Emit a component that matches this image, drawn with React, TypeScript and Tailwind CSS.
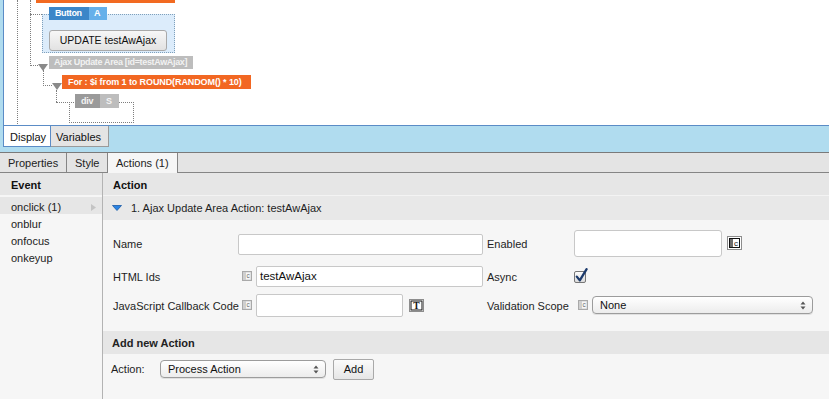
import React from "react";

const events = ["onclick (1)", "onblur", "onfocus", "onkeyup"];

function SmallC() {
  return (
    <svg width="10" height="10" viewBox="0 0 10 10" className="shrink-0">
      <rect x="0.5" y="0.5" width="9" height="9" fill="#cfcfcf" stroke="#a9a9a9" />
      <rect x="4" y="1.5" width="4.5" height="7" fill="#f7f7f7" />
      <text x="6.2" y="7.4" fontSize="6.5" textAnchor="middle" fill="#6a6a6a" fontFamily="Liberation Sans">
        c
      </text>
    </svg>
  );
}

function BigC() {
  return (
    <svg width="15" height="14" viewBox="0 0 15 14" className="shrink-0">
      <rect x="0.5" y="0.5" width="14" height="13" fill="#fff" stroke="#8d8d8d" />
      <rect x="2.5" y="2.5" width="10" height="9" fill="#fff" stroke="#111" />
      <rect x="3" y="3" width="3" height="8" fill="#6d6d6d" />
      <text x="9" y="10" fontSize="8" textAnchor="middle" fill="#111" fontFamily="Liberation Sans">
        c
      </text>
    </svg>
  );
}

function TIcon() {
  return (
    <svg width="15" height="13" viewBox="0 0 15 13" className="shrink-0">
      <rect x="0.5" y="0.5" width="14" height="12" fill="#fff" stroke="#8d8d8d" />
      <rect x="2" y="2" width="11" height="9" fill="#fff" stroke="#111" />
      <text x="7.5" y="10" fontSize="9.5" fontWeight="bold" textAnchor="middle" fill="#111" fontFamily="Liberation Serif">
        T
      </text>
    </svg>
  );
}

function Checkbox() {
  return (
    <svg width="15" height="16" viewBox="0 0 15 16" className="shrink-0">
      <defs>
        <linearGradient id="cb" x1="0" y1="0" x2="0" y2="1">
          <stop offset="0" stopColor="#ffffff" />
          <stop offset="1" stopColor="#d9d9d9" />
        </linearGradient>
      </defs>
      <rect x="0.5" y="3.5" width="11" height="11" rx="1.5" fill="url(#cb)" stroke="#777" />
      <path d="M2.8 8.6 L5.8 12.4 L12.6 1.2" fill="none" stroke="#1c3a6c" strokeWidth="2.3" strokeLinecap="round" strokeLinejoin="round" />
    </svg>
  );
}

function Stepper() {
  return (
    <svg width="6" height="9" viewBox="0 0 6 9" className="shrink-0">
      <path d="M0.5 3.5 L3 0.5 L5.5 3.5 Z" fill="#555" />
      <path d="M0.5 5.5 L3 8.5 L5.5 5.5 Z" fill="#555" />
    </svg>
  );
}

function Select({ value, width }: { value: string; width: string }) {
  return (
    <div
      className={`${width} h-[18px] flex items-center justify-between pl-[7px] pr-[6px] rounded-[4px] border border-[#9c9c9c] bg-gradient-to-b from-white to-[#ececec] shadow-[0_1px_0_#e0e0e0] text-[11px] text-[#111]`}
    >
      <span>{value}</span>
      <Stepper />
    </div>
  );
}

function Designer() {
  const dot = "absolute border-dotted border-[#7e7e7e]";
  return (
    <div className="relative h-[126px] ml-[3px] bg-white border-l border-b border-[#5b8cc6] overflow-hidden">
      {/* connector lines */}
      <div className={`${dot} left-[13px] top-0 h-[124px] border-l`} />
      <div className={`${dot} left-[26px] top-0 h-[66px] border-l`} />
      <div className={`${dot} left-[26px] top-[14px] w-[12px] border-t`} />
      <div className={`${dot} left-[26px] top-[65px] w-[8px] border-t`} />
      <div className={`${dot} left-[39px] top-[70px] h-[16px] border-l`} />
      <div className={`${dot} left-[39px] top-[85px] w-[9px] border-t`} />
      <div className={`${dot} left-[52px] top-[90px] h-[12px] border-l`} />
      <div className={`${dot} left-[52px] top-[102px] w-[14px] border-t`} />

      <svg className="absolute left-[34px] top-[64px]" width="10" height="7" viewBox="0 0 10 7">
        <path d="M0 0 H10 L5 7 Z" fill="#8a8a8a" />
      </svg>
      <svg className="absolute left-[48px] top-[83px]" width="10" height="7" viewBox="0 0 10 7">
        <path d="M0 0 H10 L5 7 Z" fill="#8a8a8a" />
      </svg>

      {/* orange element above */}
      <div className="absolute left-[32px] top-0 w-[139px] h-[3px] bg-[#f26a21]" />

      {/* Button container */}
      <div className="absolute left-[38px] top-[14px] w-[133px] h-[39px] border border-dotted border-[#7fa0bb] bg-[#dcecfb] pl-[6px] pt-[12px]">
        <button className="w-[118px] h-[21px] rounded-[3px] border border-[#a9a9a9] bg-gradient-to-b from-[#f7f7f7] to-[#e2e2e2] text-[10.5px] text-[#111] leading-none">
          UPDATE testAwAjax
        </button>
      </div>
      <div className="absolute left-[45px] top-[7px] flex h-[13px] text-[9px] font-bold tracking-[-0.4px] text-white leading-[13px]">
        <span className="w-[40px] bg-[#3b86c8] pl-[6px]">Button</span>
        <span className="w-[18px] bg-[#66b0ea] pl-[5px]">A</span>
      </div>

      {/* Ajax update area */}
      <div className="absolute left-[45px] top-[56px] w-[144px] h-[13px] bg-[#bdbdbd] text-[#f2f2f2] text-[9px] font-bold tracking-[-0.35px] leading-[13px] pl-[5px] whitespace-nowrap">
        Ajax Update Area [id=testAwAjax]
      </div>

      {/* For loop */}
      <div className="absolute left-[58px] top-[75px] w-[189px] h-[14px] bg-[#f26722] text-white text-[9px] font-bold tracking-[-0.1px] leading-[14px] pl-[6px] whitespace-nowrap">
        For : $i from 1 to ROUND(RANDOM() * 10)
      </div>

      {/* div */}
      <div className={`${dot} left-[65px] top-[102px] w-[65px] h-[21px] border`} />
      <div className="absolute left-[71px] top-[94px] flex h-[14px] text-[9px] font-bold tracking-[-0.3px] text-[#f4f4f4] leading-[14px]">
        <span className="w-[25px] bg-[#9a9a9a] pl-[6px]">div</span>
        <span className="w-[19px] bg-[#bdbdbd] pl-[6px]">S</span>
      </div>
    </div>
  );
}

export default function App() {
  return (
    <div className="w-[829px] h-[399px] overflow-hidden flex flex-col bg-[#f6f6f6] text-[#1e1e1e] font-['Liberation_Sans',Arial,sans-serif]">
      {/* top designer with display tabs */}
      <div className="h-[153px] shrink-0 bg-[#b0dcef] border-b border-[#7a7a7a] flex flex-col">
        <Designer />
        <div className="flex ml-[3px] -mt-px text-[11px] leading-none">
          <div className="w-[48px] h-[22px] bg-white border-l border-r border-b border-[#5b8cc6] pl-[6px] pt-[7px] text-[#111]">
            Display
          </div>
          <div className="w-[58px] h-[22px] bg-[#e4e4e4] border-t border-r border-b border-t-[#5b8cc6] border-r-[#9a9a9a] border-b-[#9a9a9a] pl-[5px] pt-[6px] text-[#111]">
            Variables
          </div>
        </div>
      </div>

      {/* property tabs */}
      <div className="h-[20px] shrink-0 flex bg-[#e4e4e4] text-[11px] text-[#222] leading-none">
        <div className="w-[67px] border-r border-b border-[#858585] pl-[8px] pt-[5px]">Properties</div>
        <div className="w-[41px] border-r border-b border-[#858585] pl-[8px] pt-[5px]">Style</div>
        <div className="w-[70px] border-r border-[#858585] bg-[#f6f6f6] pl-[8px] pt-[5px]">Actions (1)</div>
        <div className="flex-1 border-b border-[#858585]" />
      </div>

      <div className="flex flex-1 min-h-0">
        {/* events */}
        <div className="w-[103px] shrink-0 border-r border-[#b3b3b3]">
          <div className="h-[23px] bg-[#e6e6e6] border-b border-[#f6f6f6] pl-[11px] pt-[7px] text-[11px] font-bold leading-none text-[#111]">
            Event
          </div>
          <div className="mt-px text-[11px] text-[#222]">
            {events.map((e, i) => (
              <div
                key={e}
                className={`h-[17px] pl-[11px] pt-[3px] leading-[14px] flex justify-between pr-[6px] ${
                  i === 0 ? "bg-[#e6e6e6]" : ""
                }`}
              >
                <span>{e}</span>
                {i === 0 && (
                  <svg width="5" height="7" viewBox="0 0 5 7" className="mt-[4px]">
                    <path d="M0 0 L5 3.5 L0 7 Z" fill="#c4c4c4" />
                  </svg>
                )}
              </div>
            ))}
          </div>
        </div>

        {/* actions */}
        <div className="flex-1 text-[11px] text-[#1e1e1e]">
          <div className="h-[23px] bg-[#e6e6e6] border-b border-[#f3f3f3] pl-[10px] pt-[7px] font-bold leading-none text-[#111]">
            Action
          </div>
          <div className="h-[24px] bg-[#e8e8e8] flex items-center pl-[9px] gap-[9px]">
            <svg width="10" height="6" viewBox="0 0 10 6">
              <path d="M0.5 0.5 H9.5 L5 5.5 Z" fill="#2a83e3" stroke="#1a5aa6" strokeWidth="0.8" />
            </svg>
            <span>1. Ajax Update Area Action: testAwAjax</span>
          </div>

          <div className="pl-[10px]">
            <div className="mt-[10px] h-[27px] flex items-center">
              <div className="w-[374px] flex items-center">
                <span className="w-[125px] pt-[2px]">Name</span>
                <div className="mt-[2px] w-[245px] h-[21px] bg-white border border-[#c8c8c8] rounded-[2px]" />
              </div>
              <span className="w-[87px] pt-[2px]">Enabled</span>
              <div className="w-[148px] h-[27px] bg-white border border-[#c8c8c8] rounded-[3px]" />
              <div className="ml-[5px] -mt-[2px]">
                <BigC />
              </div>
            </div>

            <div className="mt-[8px] h-[22px] flex items-center">
              <div className="w-[374px] flex items-center">
                <span className="w-[129px] pt-[2px]">HTML Ids</span>
                <SmallC />
                <div className="ml-[4px] w-[227px] h-[21px] bg-white border border-[#c8c8c8] rounded-[2px] pl-[3px] pt-[4px] leading-none text-[11.5px] text-[#111]">
                  testAwAjax
                </div>
              </div>
              <span className="w-[87px] pt-[2px]">Async</span>
              <Checkbox />
            </div>

            <div className="mt-[6px] h-[24px] flex items-center">
              <div className="w-[374px] flex items-center">
                <span className="w-[129px] pt-[2px]">JavaScript Callback Code</span>
                <SmallC />
                <div className="ml-[4px] w-[147px] h-[23px] bg-white border border-[#c8c8c8] rounded-[2px]" />
                <div className="ml-[6px]">
                  <TIcon />
                </div>
              </div>
              <span className="w-[91px] pt-[2px]">Validation Scope</span>
              <SmallC />
              <div className="ml-[4px]">
                <Select value="None" width="w-[221px]" />
              </div>
            </div>
          </div>

          <div className="mt-[14px] h-[23px] bg-[#e6e6e6] pl-[9px] pt-[7px] font-bold leading-none text-[#222]">
            Add new Action
          </div>
          <div className="mt-[3px] h-[24px] flex items-center pl-[8px]">
            <span className="w-[49px]">Action:</span>
            <Select value="Process Action" width="w-[166px]" />
            <button className="ml-[7px] w-[41px] h-[21px] rounded-[2px] border border-[#a9a9a9] bg-gradient-to-b from-[#fbfbfb] to-[#e6e6e6] text-[11px] text-[#111] leading-none">
              Add
            </button>
          </div>
        </div>
      </div>
    </div>
  );
}
